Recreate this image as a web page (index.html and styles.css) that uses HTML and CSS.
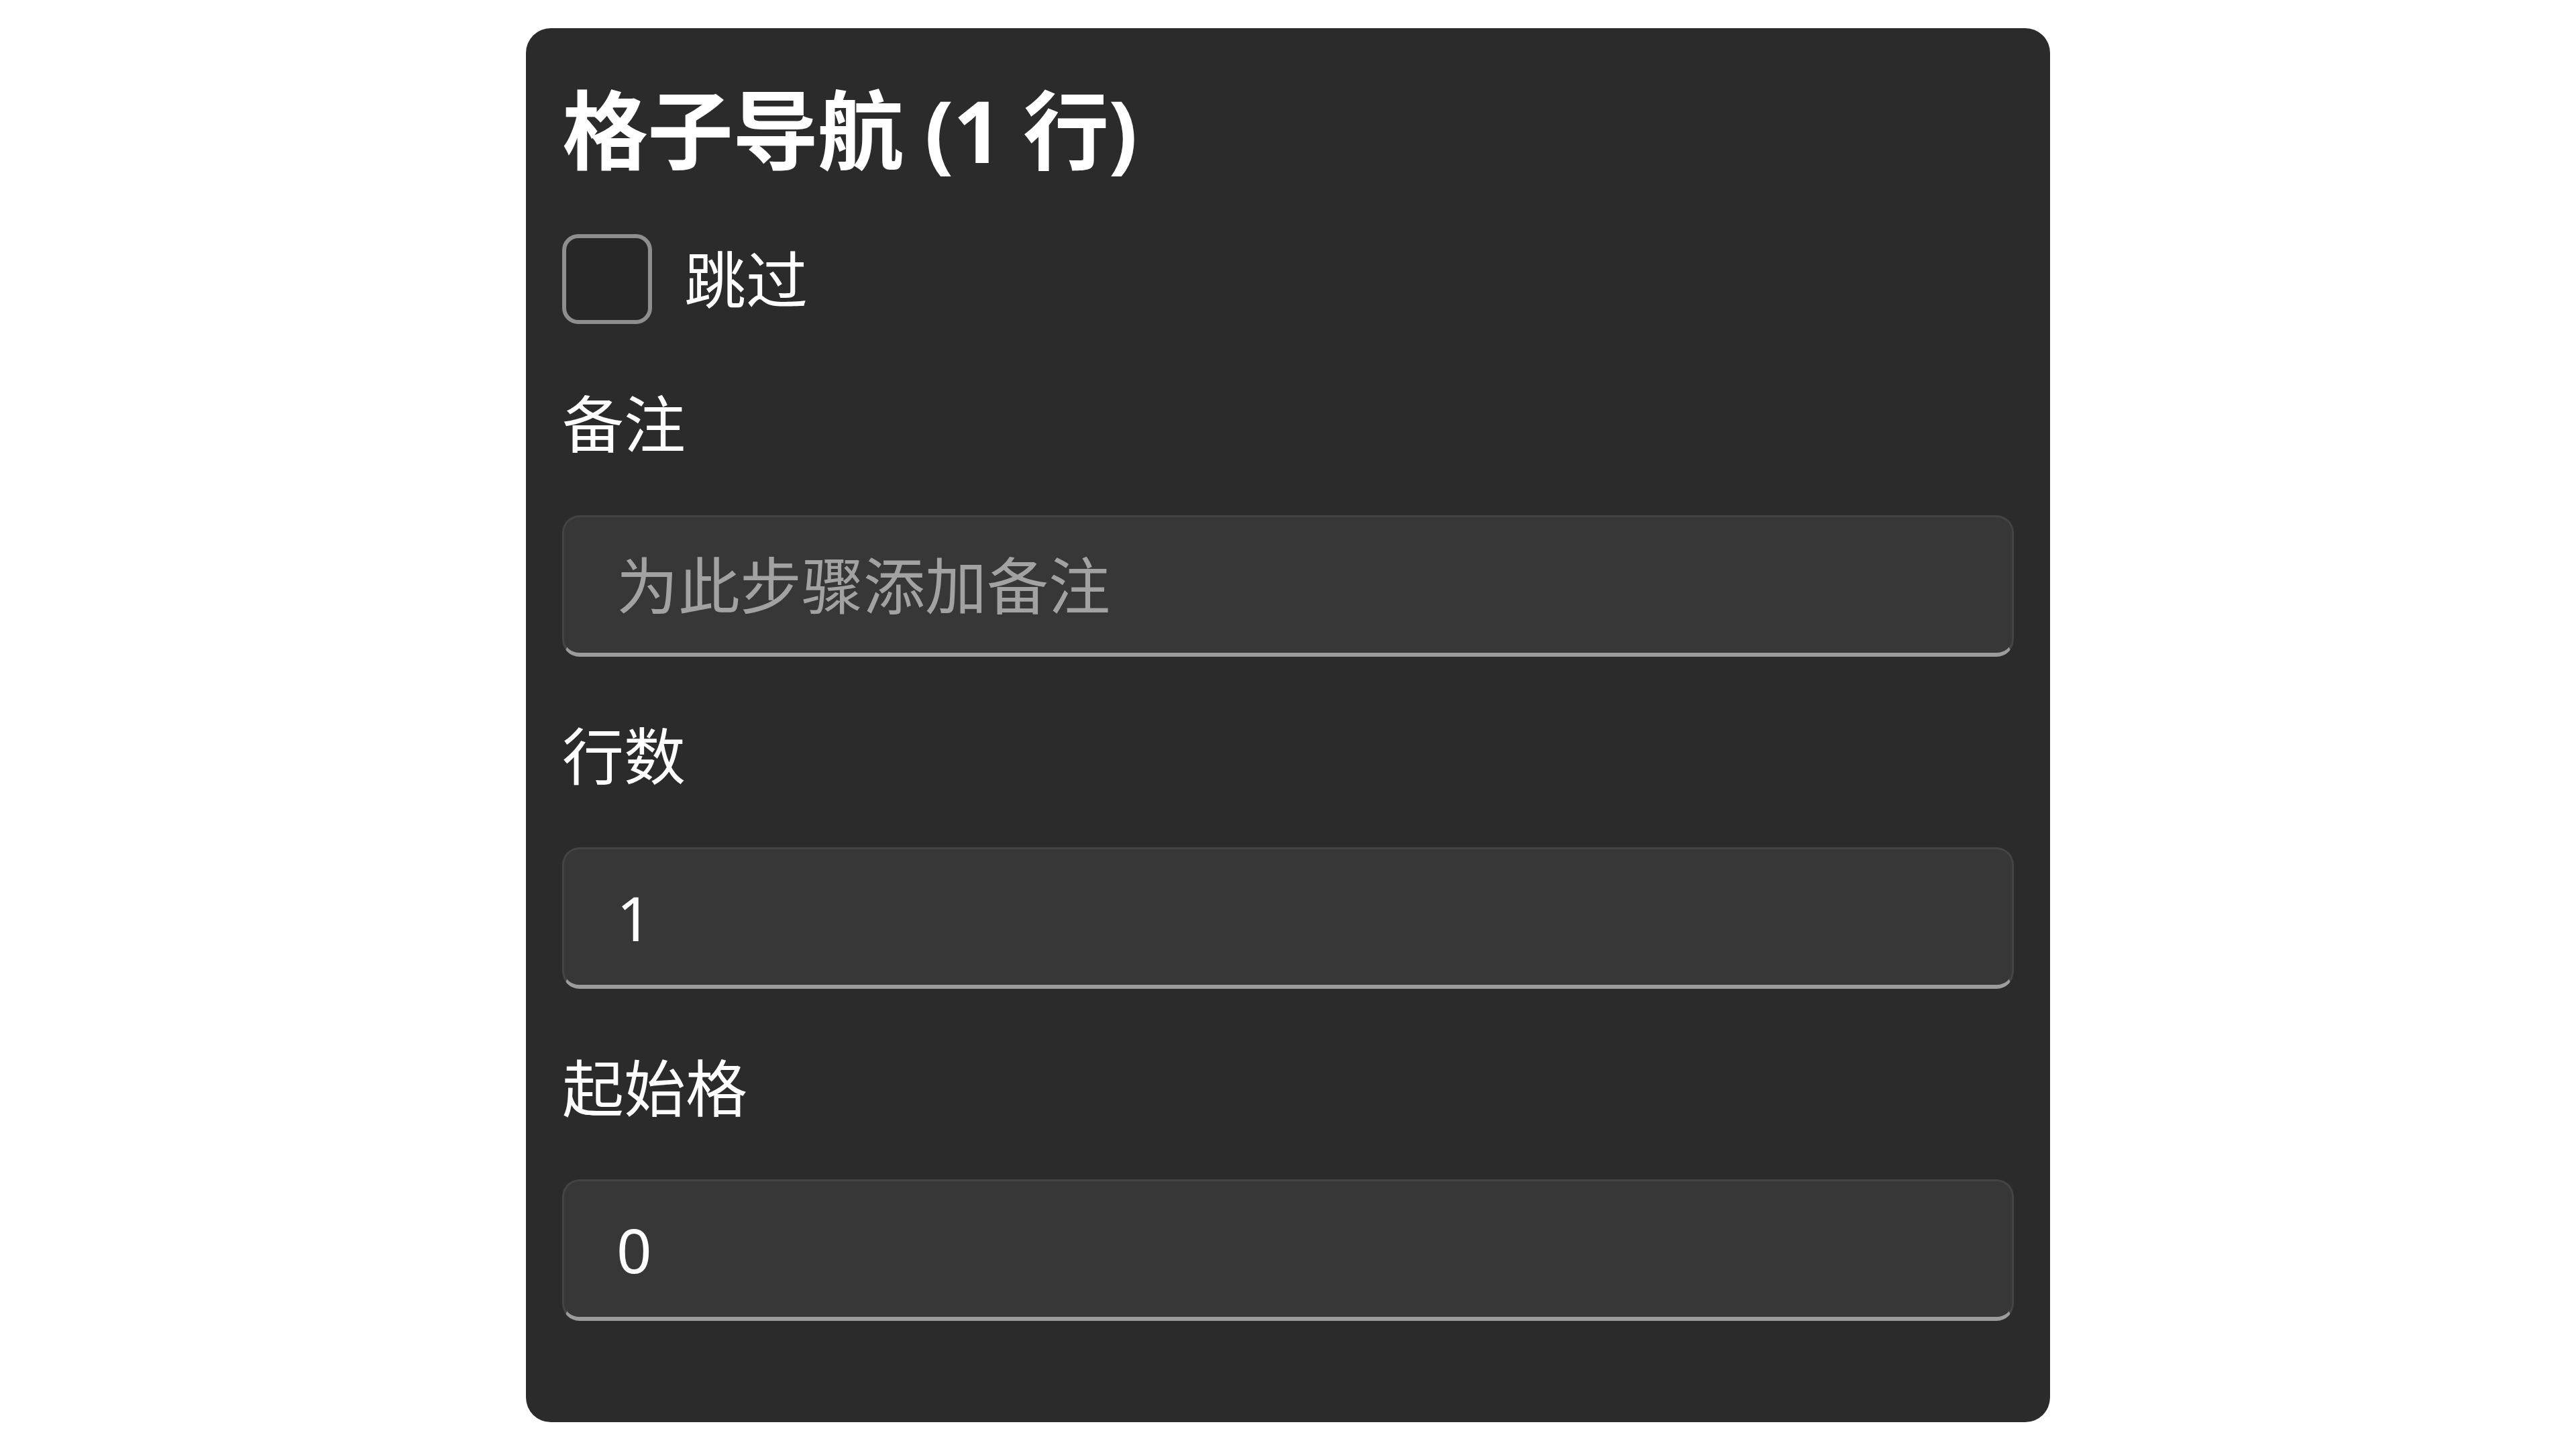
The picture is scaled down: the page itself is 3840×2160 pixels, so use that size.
FILE: index.html
```html
<!DOCTYPE html>
<html lang="zh-CN">
<head>
    <meta charset="utf-8">
    <title>格子导航</title>
    <link rel="stylesheet" href="styles.css">
</head>
<body>
    <div class="card">
        <h2 class="card-title">格子导航 (1 行)</h2>

        <label class="check-row">
            <input type="checkbox" class="check-input">
            <span class="check-box"></span>
            <span class="check-text">跳过</span>
        </label>

        <div class="field">
            <div class="field-label">备注</div>
            <input type="text" class="text-box" placeholder="为此步骤添加备注">
        </div>

        <div class="field">
            <div class="field-label">行数</div>
            <input type="text" class="text-box" value="1">
        </div>

        <div class="field">
            <div class="field-label">起始格</div>
            <input type="text" class="text-box" value="0">
        </div>
    </div>
</body>
</html>
```

FILE: styles.css
```css
body { margin: 0; background: #ffffff; font-family: "Noto Sans", "Noto Sans CJK SC", sans-serif; color: #ffffff; }
.card { width: 2272px; box-sizing: border-box; margin: 42px auto 0; padding: 58px 54px 151px; background: #2b2b2b; border-radius: 37px; }
.card-title { margin: 0; font-size: 128px; line-height: 187px; font-weight: 700; letter-spacing: -1px; }

.check-row { display: flex; align-items: center; gap: 48px; margin-top: 61px; height: 136px; cursor: pointer; }
.check-input { display: none; }
.check-box { width: 134px; height: 134px; box-sizing: border-box; border: 6px solid #8e8e8e; border-radius: 24px; background: #272727; }
.check-text { font-size: 92px; line-height: 133px; }

.field { margin-top: 81px; }
.field-label { font-size: 92px; line-height: 133px; margin-bottom: 70px; }
.text-box { display: block; width: 100%; height: 211px; box-sizing: border-box; margin: 0; padding: 0 0 0 78px; font-family: inherit; font-size: 92px; color: #ffffff; background: #373737; border: 3px solid #444444; border-bottom: 6px solid #9c9c9c; border-radius: 26px; outline: none; }
.text-box::placeholder { color: #a2a2a2; }
```
